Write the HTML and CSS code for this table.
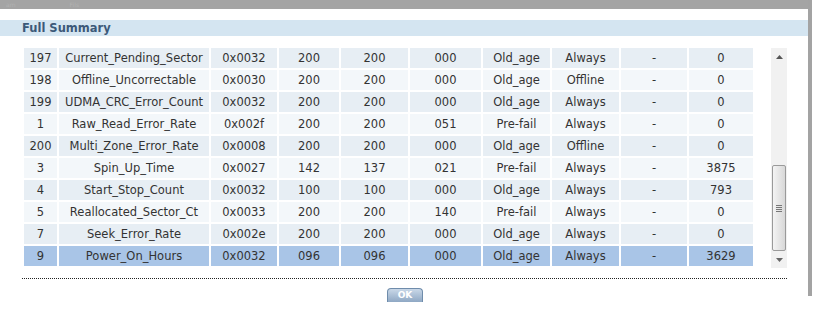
FILE: index.html
```html
<!DOCTYPE html>
<html>
<head>
<meta charset="utf-8">
<link rel="stylesheet" href="styles.css">
</head>
<body>
<div class="page">
  <div class="dialog">
    <div class="topbar"><span class="ghost">am</span><span class="ghost g2">Fils</span></div>
    <div class="header">Full Summary</div>
    <div class="content">
      <table class="grid">
        <colgroup>
          <col class="c1"><col class="c2"><col class="c3"><col class="c4"><col class="c5">
          <col class="c6"><col class="c7"><col class="c8"><col class="c9"><col class="c10">
        </colgroup>
        <tbody>
          <tr class="odd"><td>197</td><td>Current_Pending_Sector</td><td>0x0032</td><td>200</td><td>200</td><td>000</td><td>Old_age</td><td>Always</td><td>-</td><td>0</td></tr>
          <tr class="even"><td>198</td><td>Offline_Uncorrectable</td><td>0x0030</td><td>200</td><td>200</td><td>000</td><td>Old_age</td><td>Offline</td><td>-</td><td>0</td></tr>
          <tr class="odd"><td>199</td><td>UDMA_CRC_Error_Count</td><td>0x0032</td><td>200</td><td>200</td><td>000</td><td>Old_age</td><td>Always</td><td>-</td><td>0</td></tr>
          <tr class="even"><td>1</td><td>Raw_Read_Error_Rate</td><td>0x002f</td><td>200</td><td>200</td><td>051</td><td>Pre-fail</td><td>Always</td><td>-</td><td>0</td></tr>
          <tr class="odd"><td>200</td><td>Multi_Zone_Error_Rate</td><td>0x0008</td><td>200</td><td>200</td><td>000</td><td>Old_age</td><td>Offline</td><td>-</td><td>0</td></tr>
          <tr class="even"><td>3</td><td>Spin_Up_Time</td><td>0x0027</td><td>142</td><td>137</td><td>021</td><td>Pre-fail</td><td>Always</td><td>-</td><td>3875</td></tr>
          <tr class="odd"><td>4</td><td>Start_Stop_Count</td><td>0x0032</td><td>100</td><td>100</td><td>000</td><td>Old_age</td><td>Always</td><td>-</td><td>793</td></tr>
          <tr class="even"><td>5</td><td>Reallocated_Sector_Ct</td><td>0x0033</td><td>200</td><td>200</td><td>140</td><td>Pre-fail</td><td>Always</td><td>-</td><td>0</td></tr>
          <tr class="odd"><td>7</td><td>Seek_Error_Rate</td><td>0x002e</td><td>200</td><td>200</td><td>000</td><td>Old_age</td><td>Always</td><td>-</td><td>0</td></tr>
          <tr class="sel"><td>9</td><td>Power_On_Hours</td><td>0x0032</td><td>096</td><td>096</td><td>000</td><td>Old_age</td><td>Always</td><td>-</td><td>3629</td></tr>
        </tbody>
      </table>
      <div class="scrollbar">
        <div class="arrow up"><svg width="7" height="4" viewBox="0 0 7 4"><path d="M0 4 L3.5 0 L7 4 Z" fill="#555"/></svg></div>
        <div class="track">
          <div class="thumb">
            <div class="grip"><span></span><span></span><span></span><span></span></div>
          </div>
        </div>
        <div class="arrow down"><svg width="7" height="4" viewBox="0 0 7 4"><path d="M0 0 L3.5 4 L7 0 Z" fill="#666"/></svg></div>
      </div>
    </div>
    <div class="divider"></div>
    <div class="actions"><button class="ok">OK</button></div>
  </div>
  <div class="edge"></div>
</div>
</body>
</html>
```
FILE: styles.css
```css
html, body {
  margin: 0;
  padding: 0;
  background: #ffffff;
}
body {
  width: 819px;
  height: 311px;
  overflow: hidden;
  font-family: "DejaVu Sans", Verdana, sans-serif;
}
.page {
  display: flex;
  align-items: flex-start;
}
.dialog {
  width: 808px;
  height: 311px;
  background: #ffffff;
}
.edge {
  width: 4px;
  height: 296px;
  background: #a3a3a3;
}
.topbar {
  height: 9px;
  background: #a4a4a4;
  font-size: 6px;
  line-height: 9px;
  color: #b2b2b2;
}
.ghost {
  display: inline-block;
  margin-left: 6px;
}
.ghost.g2 {
  margin-left: 54px;
}
.header {
  margin-top: 11px;
  height: 16px;
  background: #d4e5f1;
  padding-left: 22px;
  font-weight: bold;
  font-size: 11.5px;
  line-height: 16px;
  color: #3c5979;
}
.content {
  display: flex;
  align-items: flex-start;
  margin-top: 10px;
  padding-left: 22px;
}
.grid {
  border-collapse: separate;
  border-spacing: 2px;
  table-layout: fixed;
  width: 733px;
  font-size: 11.5px;
  color: #333333;
}
.c1 { width: 33px; }
.c2 { width: 150px; }
.c3 { width: 66px; }
.c4 { width: 60px; }
.c5 { width: 67px; }
.c6 { width: 71px; }
.c7 { width: 67px; }
.c8 { width: 67px; }
.c9 { width: 66px; }
.c10 { width: 64px; }
.grid td {
  height: 20px;
  padding: 0;
  text-align: center;
  line-height: 20px;
  white-space: nowrap;
  overflow: hidden;
}
.odd td { background: #e7eef4; }
.even td { background: #f3f7fa; }
.sel td { background: #a9c5e7; }
.scrollbar {
  margin-left: 16px;
  margin-top: 2px;
  width: 16px;
  height: 220px;
  background: #f1f1f1;
  display: flex;
  flex-direction: column;
}
.arrow {
  height: 17px;
  display: flex;
  align-items: center;
  justify-content: center;
}
.track {
  flex: 1;
  display: flex;
  flex-direction: column;
  justify-content: flex-end;
}
.thumb {
  height: 84px;
  margin: 0 1px;
  border: 1px solid #9a9a9a;
  border-radius: 2px;
  background: linear-gradient(to right, #f4f4f4, #d8d8d8);
  display: flex;
  align-items: center;
  justify-content: center;
}
.grip {
  display: flex;
  flex-direction: column;
  gap: 1px;
}
.grip span {
  display: block;
  width: 6px;
  height: 1px;
  background: #777;
}
.divider {
  margin: 10px 21px 0 22px;
  border-top: 1px dotted #222;
}
.actions {
  display: flex;
  justify-content: center;
  padding-top: 9px;
  padding-left: 2px;
}
.ok {
  width: 36px;
  height: 14px;
  padding: 0;
  border: 1px solid #6f8cab;
  border-bottom: none;
  border-radius: 4px 4px 0 0;
  background: linear-gradient(to bottom, #c9d8e8, #8fa8c4);
  color: #ffffff;
  font-family: "DejaVu Sans", Verdana, sans-serif;
  font-weight: bold;
  font-size: 9px;
  line-height: 13px;
  vertical-align: top;
}
```
